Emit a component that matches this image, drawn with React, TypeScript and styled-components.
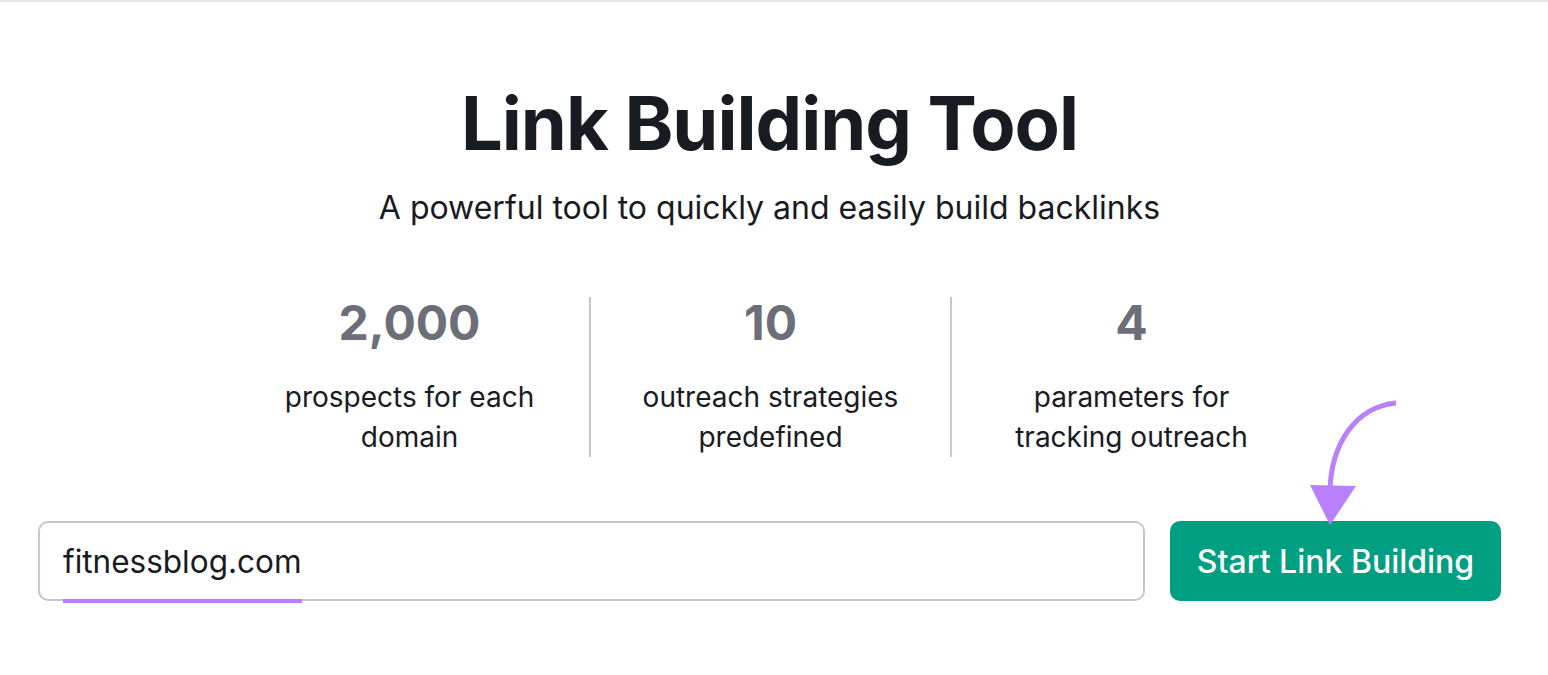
import React from "react"
import styled, { createGlobalStyle } from "styled-components"

const Global = createGlobalStyle`
    html, body {
        margin: 0;
        padding: 0;
        background: #ffffff;
    }
    body {
        font-family: Inter, "Noto Sans", "Liberation Sans", sans-serif;
        color: #191b23;
    }
`

const Page = styled.div`
    border-top: 2px solid #e4e5ec;
    padding: 76px 47px 0 38px;
    display: flex;
    flex-direction: column;
    align-items: center;
    height: 673px;
    box-sizing: border-box;
`

const Title = styled.h1`
    margin: 0;
    font-size: 74px;
    line-height: 90px;
    font-weight: 700;
    letter-spacing: -1px;
    color: #191b23;
`

const Subtitle = styled.p`
    margin: 20px 0 0;
    font-size: 32px;
    line-height: 40px;
    font-weight: 400;
    color: #191b23;
`

const Stats = styled.div`
    display: grid;
    grid-template-columns: repeat(3, 361px);
    margin-top: 69px;
`

const Stat = styled.div<{ divider?: boolean }>`
    display: flex;
    flex-direction: column;
    align-items: center;
    text-align: center;
    height: 160px;
    border-left: ${p => (p.divider ? "2px solid #c4c7d2" : "2px solid transparent")};
`

const Number = styled.div`
    font-size: 48px;
    line-height: 52px;
    font-weight: 700;
    color: #6c6e79;
`

const Label = styled.div`
    margin-top: 28px;
    font-size: 28px;
    line-height: 40px;
    color: #191b23;
`

const Form = styled.div`
    position: relative;
    align-self: stretch;
    display: flex;
    gap: 25px;
    margin-top: 64px;
`

const InputBox = styled.div`
    position: relative;
    flex: 1;
    height: 80px;
    box-sizing: border-box;
    border: 2px solid #c4c7d2;
    border-radius: 10px;
    display: flex;
    align-items: center;
    padding-left: 23px;
    font-size: 31.5px;
    color: #191b23;
`

const Typed = styled.span`
    position: relative;
    &::after {
        content: "";
        position: absolute;
        left: 0;
        right: 0;
        bottom: -22px;
        height: 4px;
        background: #b77ffb;
    }
`

const Button = styled.button`
    width: 331px;
    height: 80px;
    border: none;
    border-radius: 10px;
    background: #009f81;
    color: #ffffff;
    font-family: inherit;
    font-size: 32px;
    font-weight: 500;
`

const Arrow = styled.svg`
    position: absolute;
    right: 85px;
    top: -118px;
    width: 110px;
    height: 130px;
    overflow: visible;
`

const stats = [
    { value: "2,000", label: ["prospects for each", "domain"] },
    { value: "10", label: ["outreach strategies", "predefined"] },
    { value: "4", label: ["parameters for", "tracking outreach"] },
]

const App = () => {
    return (
        <>
            <Global />
            <Page>
                <Title>Link Building Tool</Title>
                <Subtitle>A powerful tool to quickly and easily build backlinks</Subtitle>
                <Stats>
                    {stats.map((s, i) => (
                        <Stat key={s.value} divider={i > 0}>
                            <Number>{s.value}</Number>
                            <Label>
                                {s.label[0]}
                                <br />
                                {s.label[1]}
                            </Label>
                        </Stat>
                    ))}
                </Stats>
                <Form>
                    <InputBox>
                        <Typed>fitnessblog.com</Typed>
                    </InputBox>
                    <Button>Start Link Building</Button>
                    <Arrow viewBox="0 0 110 130">
                        <path d="M90 0 C 50 4, 25 40, 24 88" fill="none" stroke="#b880fb" strokeWidth="5" />
                        <polygon points="4,82 50,83 24,122" fill="#b880fb" />
                    </Arrow>
                </Form>
            </Page>
        </>
    )
}

export default App
